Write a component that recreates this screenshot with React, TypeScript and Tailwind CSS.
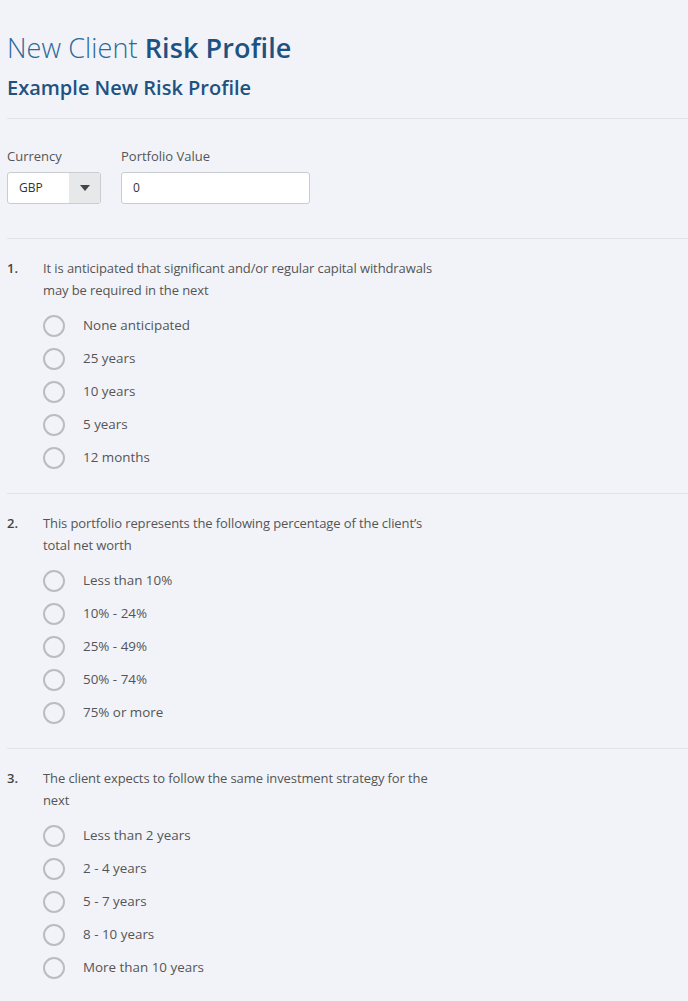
import React from "react";

const questions = [
  {
    n: "1.",
    lines: ["It is anticipated that significant and/or regular capital withdrawals", "may be required in the next"],
    options: ["None anticipated", "25 years", "10 years", "5 years", "12 months"],
  },
  {
    n: "2.",
    lines: ["This portfolio represents the following percentage of the client\u2019s", "total net worth"],
    options: ["Less than 10%", "10% - 24%", "25% - 49%", "50% - 74%", "75% or more"],
  },
  {
    n: "3.",
    lines: ["The client expects to follow the same investment strategy for the", "next"],
    options: ["Less than 2 years", "2 - 4 years", "5 - 7 years", "8 - 10 years", "More than 10 years"],
  },
];

export default function App() {
  return (
    <div
      className="min-h-[1001px] w-full bg-[#f2f3f8] pl-[7px] overflow-hidden"
      style={{ fontFamily: "'Open Sans', 'Noto Sans', sans-serif" }}
    >
      <div className="pt-[32px]">
        <h1 className="text-[27px] leading-[32px] text-[#2c6a9b] tracking-[0.1px]">
          <span className="font-light">New Client </span>
          <span className="font-semibold text-[#1d5282]">Risk Profile</span>
        </h1>
        <h2 className="mt-[12px] text-[20px] leading-[24px] font-semibold text-[#1d5282]">
          Example New Risk Profile
        </h2>
      </div>
      <div className="mt-[18px] h-px bg-[#e1e3e8]" />

      <div className="pt-[28px] pb-[34px] flex gap-[20px]">
        <div className="flex flex-col">
          <label className="text-[13px] leading-[18px] text-[#555]">Currency</label>
          <div className="mt-[7px] flex h-[32px] w-[94px] rounded-[3px] border border-[#c9cdd1] overflow-hidden bg-white">
            <div className="flex-1 flex items-center pl-[11px] text-[12px] text-[#333]">GBP</div>
            <div className="w-[31px] bg-[#e6e8ea] flex items-center justify-center">
              <svg width="10" height="6" viewBox="0 0 10 6">
                <path d="M0 0 L10 0 L5 6 Z" fill="#444" />
              </svg>
            </div>
          </div>
        </div>
        <div className="flex flex-col">
          <label className="text-[13px] leading-[18px] text-[#555]">Portfolio Value</label>
          <div className="mt-[7px] flex items-center h-[32px] w-[189px] rounded-[3px] border border-[#c9cdd1] bg-white pl-[11px] text-[12px] text-[#333]">
            0
          </div>
        </div>
      </div>

      {questions.map((q) => (
        <div key={q.n}>
          <div className="h-px bg-[#e1e3e8]" />
          <div className="pt-[18px] pb-[19px]">
            <div className="flex">
              <div className="w-[36px] text-[13px] leading-[22px] font-semibold text-[#444]">{q.n}</div>
              <div className="text-[13px] leading-[22px] text-[#555] tracking-[-0.1px]">
                {q.lines.map((l) => (
                  <div key={l} className="whitespace-nowrap">{l}</div>
                ))}
              </div>
            </div>
            <div className="mt-[8px] pl-[36px] flex flex-col">
              {q.options.map((o) => (
                <div key={o} className="h-[33px] flex items-center">
                  <span className="w-[22px] h-[22px] rounded-full border-2 border-[#b8bebf] box-border" />
                  <span className="ml-[18px] text-[13.4px] text-[#555]">{o}</span>
                </div>
              ))}
            </div>
          </div>
        </div>
      ))}
    </div>
  );
}
